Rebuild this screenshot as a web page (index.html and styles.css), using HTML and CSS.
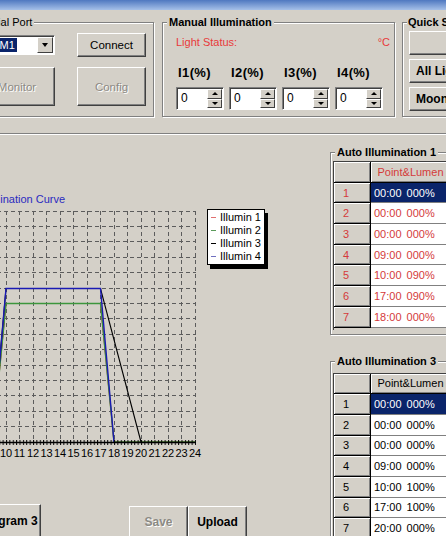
FILE: index.html
```html
<!DOCTYPE html>
<html lang="en">
<head>
  <meta charset="UTF-8">
  <title>Light Controller</title>
  <link rel="stylesheet" href="styles.css">
</head>
<body>
  <div class="titlebar"></div>

  <div class="top-row">
    <fieldset class="group serial">
      <legend>Serial Port</legend>
      <div class="serial-grid">
        <div class="combo">
          <span class="combo-text"><span class="sel">COM1</span></span>
          <span class="combo-btn"><span class="tri-down"></span></span>
        </div>
        <button class="btn">Connect</button>
        <button class="btn tall" disabled>Monitor</button>
        <button class="btn tall" disabled>Config</button>
      </div>
    </fieldset>

    <fieldset class="group manual">
      <legend>Manual Illumination</legend>
      <div class="status">
        <span>Light Status:</span>
        <span>°C</span>
      </div>
      <div class="spin-grid">
        <label>I1(%)</label>
        <label>I2(%)</label>
        <label>I3(%)</label>
        <label>I4(%)</label>
        <div class="spin"><span class="spin-val">0</span><span class="spin-btns"><span class="sb"><i class="tri-up"></i></span><span class="sb"><i class="tri-dn"></i></span></span></div>
        <div class="spin"><span class="spin-val">0</span><span class="spin-btns"><span class="sb"><i class="tri-up"></i></span><span class="sb"><i class="tri-dn"></i></span></span></div>
        <div class="spin"><span class="spin-val">0</span><span class="spin-btns"><span class="sb"><i class="tri-up"></i></span><span class="sb"><i class="tri-dn"></i></span></span></div>
        <div class="spin"><span class="spin-val">0</span><span class="spin-btns"><span class="sb"><i class="tri-up"></i></span><span class="sb"><i class="tri-dn"></i></span></span></div>
      </div>
    </fieldset>

    <fieldset class="group quick">
      <legend>Quick Switch</legend>
      <button class="btn quick-btn"></button>
      <button class="btn quick-btn">All Lights On</button>
      <button class="btn quick-btn">Moonlight</button>
    </fieldset>
  </div>

  <div class="separator"></div>

  <div class="main">
    <div class="left-col">
      <div class="chart-title">Illumination Curve</div>
      <div class="chart-row">
        <svg class="chart" width="205" height="252" viewBox="0 0 205 252">
          <defs>
            <pattern id="ticks" x="6" y="0" width="3.375" height="6" patternUnits="userSpaceOnUse">
              <rect width="1" height="6" fill="#000"/>
            </pattern>
          </defs>
          <g stroke="#5c5c5c" stroke-dasharray="4 3" fill="none">
            <path d="M6.5 3V234M19.5 3V234M33.5 3V234M46.5 3V234M60.5 3V234M73.5 3V234M87.5 3V234M100.5 3V234M114.5 3V234M127.5 3V234M141.5 3V234M154.5 3V234M168.5 3V234M181.5 3V234M195.5 3V234"/>
            <path d="M-10 3.5H196M-10 18.5H196M-10 33.5H196M-10 49.5H196M-10 64.5H196M-10 80.5H196M-10 95.5H196M-10 110.5H196M-10 126.5H196M-10 141.5H196M-10 157.5H196M-10 172.5H196M-10 187.5H196M-10 203.5H196M-10 218.5H196"/>
          </g>
          <g fill="none" stroke-width="1.1">
            <path stroke="#e02020" d="M-20 234H-7.5L6 95.5H100.5L114 234H195"/>
            <path stroke="#3c963c" d="M-20 234H-7.5L6 95.5H100.5L114 234H195" stroke-width="1.4"/>
            <path stroke="#000" d="M-20 234H-7.5L6 80.5H100.5L141 234"/>
            <path stroke="#1a1ab4" d="M-20 234H-7.5L6 80.5H100.5L114 234" stroke-width="1.4"/>
          </g>
          <rect x="-8" y="232" width="204" height="5" fill="url(#ticks)"/>
          <path d="M-10 234.5H196" stroke="#000" stroke-width="1.5"/>
          <g class="ticklabels" font-size="11" text-anchor="middle">
            <text x="6" y="249">10</text>
            <text x="19.5" y="249">11</text>
            <text x="33" y="249">12</text>
            <text x="46.5" y="249">13</text>
            <text x="60" y="249">14</text>
            <text x="73.5" y="249">15</text>
            <text x="87" y="249">16</text>
            <text x="100.5" y="249">17</text>
            <text x="114" y="249">18</text>
            <text x="127.5" y="249">19</text>
            <text x="141" y="249">20</text>
            <text x="154.5" y="249">21</text>
            <text x="168" y="249">22</text>
            <text x="181.5" y="249">23</text>
            <text x="195" y="249">24</text>
          </g>
        </svg>
        <ul class="legend">
          <li><span class="swatch s1"></span>Illumin 1</li>
          <li><span class="swatch s2"></span>Illumin 2</li>
          <li><span class="swatch s3"></span>Illumin 3</li>
          <li><span class="swatch s4"></span>Illumin 4</li>
        </ul>
      </div>
      <div class="bottom-btns">
        <button class="btn bold program">Program 3</button>
        <button class="btn bold save" disabled>Save</button>
        <button class="btn bold upload">Upload</button>
      </div>
    </div>

    <div class="right-col">
      <fieldset class="group auto auto1">
        <legend>Auto Illumination 1</legend>
        <div class="grid-wrap">
          <table class="grid red">
            <tr><th class="fixed"></th><th class="fixed head">Point&amp;Lumen</th></tr>
            <tr><td class="fixed">1</td><td class="cell selected">00:00 000%</td></tr>
            <tr><td class="fixed">2</td><td class="cell">00:00 000%</td></tr>
            <tr><td class="fixed">3</td><td class="cell">00:00 000%</td></tr>
            <tr><td class="fixed">4</td><td class="cell">09:00 000%</td></tr>
            <tr><td class="fixed">5</td><td class="cell">10:00 090%</td></tr>
            <tr><td class="fixed">6</td><td class="cell">17:00 090%</td></tr>
            <tr><td class="fixed">7</td><td class="cell">18:00 000%</td></tr>
          </table>
        </div>
      </fieldset>

      <fieldset class="group auto auto3">
        <legend>Auto Illumination 3</legend>
        <div class="grid-wrap">
          <table class="grid">
            <tr><th class="fixed"></th><th class="fixed head">Point&amp;Lumen</th></tr>
            <tr><td class="fixed">1</td><td class="cell selected">00:00 000%</td></tr>
            <tr><td class="fixed">2</td><td class="cell">00:00 000%</td></tr>
            <tr><td class="fixed">3</td><td class="cell">00:00 000%</td></tr>
            <tr><td class="fixed">4</td><td class="cell">09:00 000%</td></tr>
            <tr><td class="fixed">5</td><td class="cell">10:00 100%</td></tr>
            <tr><td class="fixed">6</td><td class="cell">17:00 100%</td></tr>
            <tr><td class="fixed">7</td><td class="cell">20:00 000%</td></tr>
          </table>
        </div>
      </fieldset>
    </div>
  </div>
</body>
</html>
```

FILE: styles.css
```css
* { box-sizing: border-box; }
html, body { margin: 0; overflow: hidden; }
body {
  width: 446px;
  height: 536px;
  background: #d4d0c8;
  font-family: 'Liberation Sans', Arial, sans-serif;
  font-size: 11px;
  color: #000;
}

.titlebar {
  height: 10px;
  background: linear-gradient(#4f78c0, #a6c0e8);
}

/* classic etched group box */
.group {
  margin: 0;
  padding: 0;
  min-width: 0;
  border: 1px solid #808080;
  box-shadow: 1px 1px 0 #fff, inset 1px 1px 0 #fff;
}
.group legend {
  padding: 0 2px;
  line-height: 13px;
  background: #d4d0c8;
}
.manual legend, .quick legend, .auto legend { font-weight: bold; }

/* classic raised button */
.btn {
  font: inherit;
  color: #000;
  background: #d4d0c8;
  padding: 0;
  border: 1px solid;
  border-color: #fff #404040 #404040 #fff;
  box-shadow: inset -1px -1px 0 #808080;
  cursor: pointer;
}
.btn:disabled {
  color: #8c8a84;
  text-shadow: 1px 1px 0 #fff;
  cursor: default;
}
.btn.bold { font-weight: bold; font-size: 12px; }

.top-row {
  display: flex;
  margin-top: 6px;
}

.serial {
  flex-shrink: 0;
  margin-left: -31px;
  padding: 4px 7px 10px 9px;
}
.serial-grid {
  display: grid;
  grid-template-columns: 76px 69px;
  grid-template-rows: 24px 39px;
  column-gap: 22px;
  row-gap: 10px;
  align-items: center;
}
.serial-grid .btn { height: 24px; font-size: 11.5px; }
.serial-grid .btn.tall { height: 39px; }

.combo {
  display: flex;
  height: 20px;
  background: #fff;
  border: 1px solid;
  border-color: #808080 #fff #fff #808080;
  box-shadow: inset 1px 1px 0 #404040;
  padding: 2px 1px 1px 2px;
}
.combo-text {
  flex: 1;
  line-height: 14px;
}
.sel {
  display: inline-block;
  background: #0a246a;
  color: #fff;
  padding: 0 2px 0 1px;
}
.combo-btn {
  width: 16px;
  display: flex;
  align-items: center;
  justify-content: center;
  background: #d4d0c8;
  border: 1px solid;
  border-color: #fff #404040 #404040 #fff;
  margin-top: -1px;
}
.tri-down {
  border-left: 3.5px solid transparent;
  border-right: 3.5px solid transparent;
  border-top: 4px solid #000;
}

.manual {
  flex-shrink: 0;
  width: 233px;
  margin-left: 8px;
  padding: 0 4px 6px 4px;
}
.status {
  display: flex;
  justify-content: space-between;
  margin-top: 7px;
  padding-left: 9px;
  line-height: 13px;
  color: #e83a3a;
}
.spin-grid {
  display: grid;
  grid-template-columns: repeat(4, 48px);
  column-gap: 5px;
  row-gap: 7px;
  margin: 16px 0 0 9px;
}
.spin-grid label {
  padding-left: 2px;
  font-weight: bold;
  font-size: 13px;
  line-height: 15px;
  letter-spacing: 0.4px;
}
.spin {
  display: flex;
  height: 23px;
  background: #fff;
  border: 1px solid;
  border-color: #808080 #fff #fff #808080;
  box-shadow: inset 1px 1px 0 #404040;
  padding: 1px;
}
.spin-val {
  flex: 1;
  padding: 0 0 0 3px;
  font-size: 12px;
  line-height: 19px;
}
.spin-btns {
  display: flex;
  flex-direction: column;
  width: 15px;
}
.sb {
  flex: 1;
  display: flex;
  align-items: center;
  justify-content: center;
  background: #d4d0c8;
  border: 1px solid;
  border-color: #fff #404040 #404040 #fff;
}
.tri-up {
  border-left: 3px solid transparent;
  border-right: 3px solid transparent;
  border-bottom: 3px solid #000;
}
.tri-dn {
  border-left: 3px solid transparent;
  border-right: 3px solid transparent;
  border-top: 3px solid #000;
}

.quick {
  flex-shrink: 0;
  width: 130px;
  margin-left: 7px;
  padding: 2px 0 0 6px;
}
.quick legend { padding: 0 1px; margin-left: -2px; }
.quick-btn {
  display: block;
  width: 110px;
  height: 24px;
  margin-bottom: 4px;
  padding-left: 6px;
  text-align: left;
  font-weight: bold;
  font-size: 12px;
}

.separator {
  margin-top: 16px;
  height: 2px;
  border-top: 1px solid #808080;
  border-bottom: 1px solid #fff;
}

.main { display: flex; }

.left-col {
  width: 330px;
  flex-shrink: 0;
}
.chart-title {
  margin: 58px 0 0 -23px;
  line-height: 13px;
  color: #2a2ac0;
  white-space: nowrap;
}
.chart-row {
  display: flex;
  align-items: flex-start;
  margin-top: 2px;
}
.chart { display: block; overflow: hidden; }
.ticklabels { font-family: 'Liberation Sans', Arial, sans-serif; }

.legend {
  list-style: none;
  margin: 1px 0 0 2px;
  padding: 1px 3px;
  background: #fff;
  border: 1px solid #000;
  box-shadow: 3px 4px 0 #000;
}
.legend li {
  display: flex;
  align-items: center;
  gap: 4px;
  height: 13px;
  line-height: 13px;
  white-space: nowrap;
}
.swatch { width: 5px; height: 1px; }
.s1 { background: #e07070; }
.s2 { background: #5a9a5a; }
.s3 { background: #000; }
.s4 { background: #7070c0; }

.bottom-btns {
  display: flex;
  align-items: flex-start;
  margin-top: 44px;
}
.program {
  width: 66px;
  height: 34px;
  margin-left: -25px;
}
.save, .upload {
  width: 59px;
  height: 32px;
  margin-top: 2px;
}
.save { margin-left: 88px; }

.right-col {
  flex-shrink: 0;
  margin-top: 11px;
}
.auto {
  width: 140px;
  padding: 2px 0 4px 2px;
}
.auto legend { margin-left: 2px; }
.auto3 {
  margin-top: 20px;
  padding-top: 5px;
}

.grid-wrap {
  border-top: 1px solid #404040;
  border-left: 1px solid #404040;
  padding-bottom: 2px;
}
.grid {
  border-spacing: 0;
  table-layout: fixed;
  width: 117px;
}
.grid tr { height: 20.7px; }
.grid th, .grid td {
  padding: 0 0 0 3px;
  text-align: left;
  font-weight: normal;
  white-space: nowrap;
  word-spacing: 2px;
}
.grid .fixed {
  width: 37px;
  padding-left: 9px;
  background: #d4d0c8;
  border-right: 1px solid #000;
  border-bottom: 1px solid #000;
  box-shadow: inset 1px 1px 0 #fff, inset -1px -1px 0 #808080;
}
.grid .head {
  width: 80px;
  padding-left: 0;
  text-align: center;
}
.grid .cell {
  background: #fff;
  border-right: 1px solid #808080;
  border-bottom: 1px solid #808080;
}
.grid .cell.selected {
  background: #0a246a;
  color: #fff;
}
.grid.red th, .grid.red td { color: #d43a3a; }
.grid.red .cell.selected { color: #fff; }
```
